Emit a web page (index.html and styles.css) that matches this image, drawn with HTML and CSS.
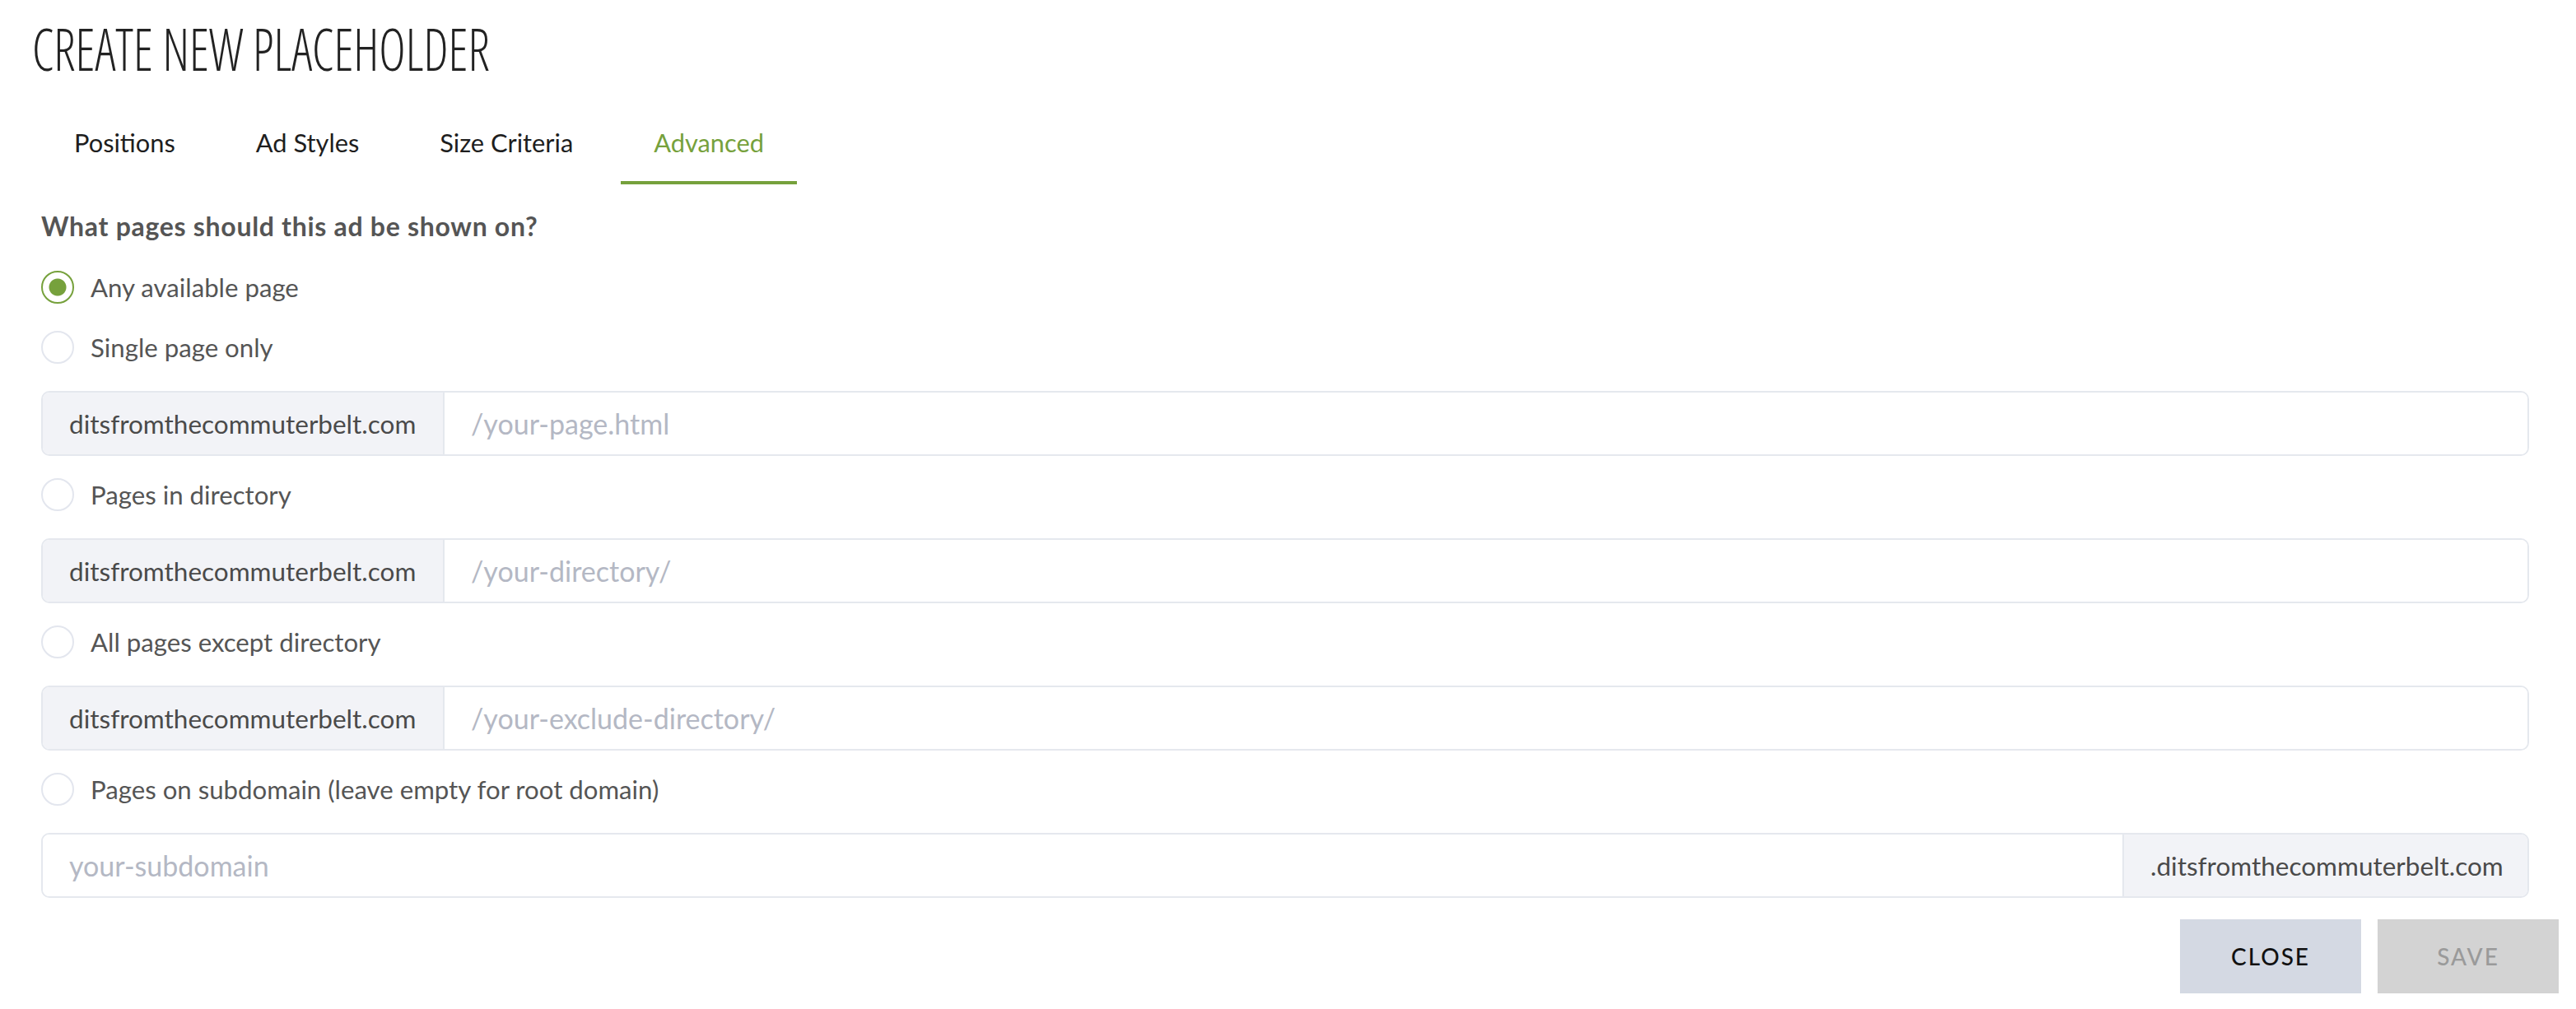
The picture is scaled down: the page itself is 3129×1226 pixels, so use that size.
FILE: index.html
```html
<!DOCTYPE html>
<html lang="en">
<head>
<meta charset="utf-8">
<title>Create new placeholder</title>
<link rel="stylesheet" href="styles.css">
</head>
<body>
<div class="modal">
  <h1 class="title">CREATE NEW PLACEHOLDER</h1>
  <nav class="tabs">
    <a class="tab">Positions</a>
    <a class="tab">Ad Styles</a>
    <a class="tab">Size Criteria</a>
    <a class="tab active">Advanced</a>
  </nav>
  <div class="panel">
    <p class="question">What pages should this ad be shown on?</p>

    <label class="option"><input class="radio" type="radio" name="pages" checked><span>Any available page</span></label>
    <label class="option"><input class="radio" type="radio" name="pages"><span>Single page only</span></label>
    <div class="group">
      <span class="addon">ditsfromthecommuterbelt.com</span>
      <input class="field" type="text" placeholder="/your-page.html">
    </div>

    <label class="option"><input class="radio" type="radio" name="pages"><span>Pages in directory</span></label>
    <div class="group">
      <span class="addon">ditsfromthecommuterbelt.com</span>
      <input class="field" type="text" placeholder="/your-directory/">
    </div>

    <label class="option"><input class="radio" type="radio" name="pages"><span>All pages except directory</span></label>
    <div class="group">
      <span class="addon">ditsfromthecommuterbelt.com</span>
      <input class="field" type="text" placeholder="/your-exclude-directory/">
    </div>

    <label class="option"><input class="radio" type="radio" name="pages"><span>Pages on subdomain (leave empty for root domain)</span></label>
    <div class="group group-last">
      <input class="field" type="text" placeholder="your-subdomain">
      <span class="addon addon-right">.ditsfromthecommuterbelt.com</span>
    </div>
  </div>
  <div class="footer">
    <button class="btn btn-close" type="button">CLOSE</button>
    <button class="btn btn-save" type="button" disabled>SAVE</button>
  </div>
</div>
</body>
</html>
```

FILE: styles.css
```css
* { box-sizing: border-box; }

html, body {
  margin: 0;
  padding: 0;
  background: #ffffff;
}

body {
  font-family: "Lato", "Noto Sans", sans-serif;
  color: #555555;
}

.modal {
  padding-top: 19px;
}

.title {
  margin: 0 0 0 39px;
  font-family: "Open Sans", "Roboto", sans-serif;
  font-weight: 300;
  font-stretch: 75%;
  font-size: 71px;
  line-height: 80px;
  color: #222222;
  letter-spacing: 0;
  transform: scaleX(0.8675);
  transform-origin: left center;
}

.tabs {
  display: flex;
  gap: 18px;
  margin: 31px 0 0 50px;
}

.tab {
  display: block;
  padding: 20px 40px 22px;
  font-size: 30.8px;
  line-height: 48px;
  color: #1e1e1e;
  border-bottom: 4px solid transparent;
  cursor: pointer;
}

.tab.active {
  color: #76a13c;
  border-bottom-color: #76a13c;
}

.panel {
  padding: 0 57px 0 50px;
}

.question {
  margin: 27px 0 30px;
  font-size: 32px;
  line-height: 48px;
  font-weight: 700;
  letter-spacing: 0.7px;
  color: #555555;
}

.option {
  display: flex;
  align-items: center;
  height: 40px;
  margin-bottom: 33px;
  font-size: 31.2px;
  line-height: 40px;
  color: #555555;
  cursor: pointer;
}

.radio {
  appearance: none;
  -webkit-appearance: none;
  flex: none;
  width: 40px;
  height: 40px;
  margin: 0 20px 0 0;
  border: 2.5px solid #e3e6ee;
  border-radius: 50%;
  background: #ffffff;
}

.radio:checked {
  border-color: #76a13c;
  background: radial-gradient(circle at center, #76a13c 0 10px, transparent 11px);
}

.group {
  display: flex;
  height: 79px;
  margin-bottom: 27px;
  border: 2px solid #e5e8ee;
  border-radius: 10px;
  overflow: hidden;
}

.group-last {
  margin-bottom: 0;
}

.addon {
  display: flex;
  align-items: center;
  flex: none;
  width: 488px;
  padding: 0 32px;
  background: #f2f3f7;
  border-right: 2px solid #e5e8ee;
  font-size: 31.5px;
  color: #4a4a4a;
  white-space: nowrap;
}

.addon-right {
  width: 492px;
  border-right: 0;
  border-left: 2px solid #e5e8ee;
}

.field {
  flex: 1;
  min-width: 0;
  border: 0;
  outline: none;
  padding: 0 32px;
  font-family: inherit;
  font-size: 34px;
  color: #444444;
  background: #ffffff;
}

.field::placeholder {
  color: #b4b8c4;
}

.footer {
  display: flex;
  justify-content: flex-end;
  gap: 20px;
  margin-top: 26px;
  padding-right: 21px;
}

.btn {
  width: 220px;
  height: 90px;
  border: 0;
  border-radius: 0;
  font-family: "Lato", "Noto Sans", sans-serif;
  font-size: 28px;
  font-weight: 500;
  letter-spacing: 2px;
  cursor: pointer;
}

.btn-close {
  background: #d4d9e3;
  color: #111111;
}

.btn-save {
  background: #d3d3d3;
  color: #9a9a9a;
  cursor: default;
}
```
